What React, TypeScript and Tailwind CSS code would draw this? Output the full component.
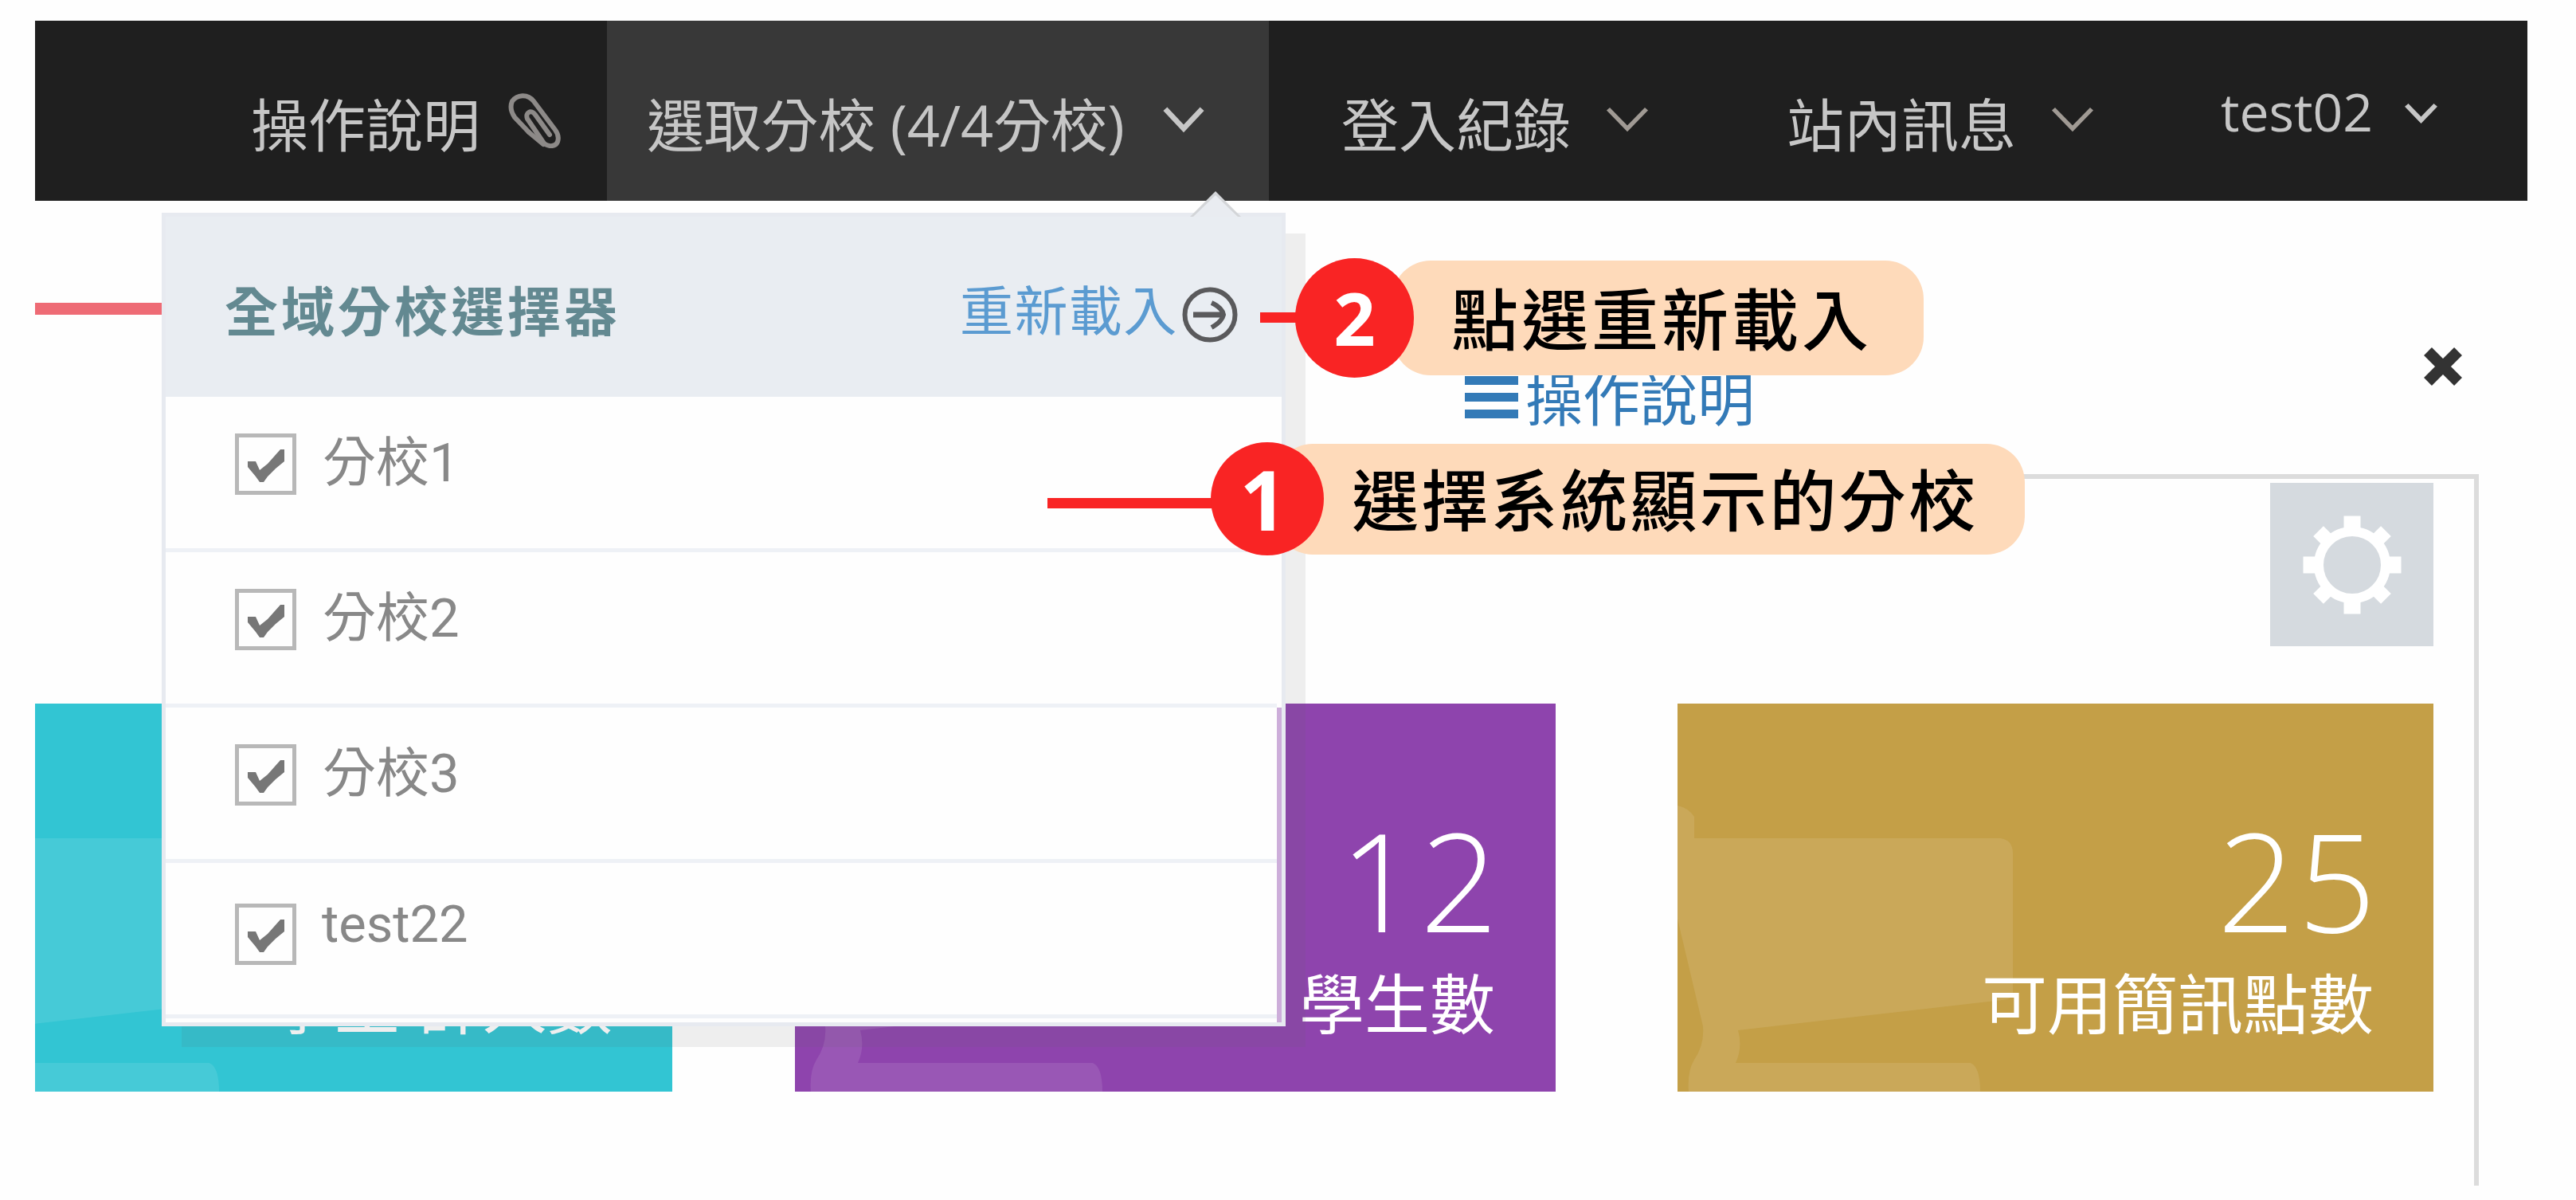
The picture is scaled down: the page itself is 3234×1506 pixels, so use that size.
import React from "react";

const SANS = "font-['Open_Sans','Noto_Sans_CJK_TC',sans-serif]";

function Chevron({ className, strokeWidth = 7 }: { className: string; strokeWidth?: number }) {
  return (
    <svg viewBox="0 0 54 36" preserveAspectRatio="none" fill="none" stroke="currentColor" strokeWidth={strokeWidth} className={className}>
      <path d="M3 4 L27 30 L51 4" />
    </svg>
  );
}

function PaperClip() {
  return (
    <svg viewBox="637 116 70 70" fill="none" stroke="#8d8a88" strokeWidth="6" strokeLinecap="round" className="ml-[33px] -mt-[4px] h-[70px] w-[70px] shrink-0">
      <path d="M690 169 L672 144 C667 137 659 141 662 149 L681 177 C686 185 697 185 700 178 C702 172 700 167 697 163 L670 127 C662 117 649 119 643 127 C640 134 642 141 646 147 L664 166" />
      <path d="M664 166 L682 181" />
    </svg>
  );
}

function CircleArrow() {
  return (
    <svg viewBox="0 0 72 72" fill="none" stroke="#5a5a5c" strokeWidth="6" className="ml-[6px] h-[72px] w-[72px] shrink-0">
      <circle cx="36" cy="36" r="31.5" />
      <path d="M15 36 H54" strokeWidth="7" />
      <path d="M38 21 C47 25 52 31 53 36 C52 41 47 47 38 52" />
    </svg>
  );
}

function Gear() {
  const diagonals = [45, 135, 225, 315];
  const straight = [0, 90, 180, 270];
  return (
    <svg viewBox="-62 -62 124 124" className="h-[124px] w-[124px]">
      <circle r="42" fill="none" stroke="#fff" strokeWidth="12" />
      {straight.map((a) => (
        <rect key={a} x="-10.5" y="-61.5" width="21" height="22" fill="#fff" transform={`rotate(${a})`} />
      ))}
      {diagonals.map((a) => (
        <rect key={a} x="-9" y="-60" width="18" height="20" fill="#fff" transform={`rotate(${a})`} />
      ))}
    </svg>
  );
}

function CartShape() {
  return (
    <svg viewBox="0 0 949 487" fill="#fff" fillOpacity="0.1" className="absolute right-0 top-0 h-[487px] w-[949px] overflow-visible">
      <path d="M-106 169 H0 V128 Q14 131 21 142 V169 H405 Q421 171 421 188 V364 Q420 371 408 372 L76 410 Q82 432 73 451 H368 Q380 456 380 487 H14 Q12 462 21 447 Q34 428 32 405 L0 270 V401 L-106 423 Z" />
    </svg>
  );
}

function StatCard({ className, value, label, textClass }: { className: string; value: string; label: string; textClass: string }) {
  return (
    <div className={`relative h-[487px] shrink-0 overflow-hidden text-right text-white ${className}`}>
      <CartShape />
      <div className="relative mr-[69px] mt-[134px] text-[172px] font-light leading-none tracking-[3px]">{value}</div>
      <div className={`relative mt-[29px] whitespace-pre text-[82px] font-normal leading-none ${textClass}`}>{label}</div>
    </div>
  );
}

function BranchRow({ label, latin }: { label: string; latin?: string }) {
  return (
    <li className="flex h-[195px] border-b-[5px] border-[#eef1f6] pl-[87px]">
      <span className={`flex h-[77px] w-[77px] shrink-0 items-center justify-center border-[5px] border-[#b8b8b8] ${label ? "mt-[46px]" : "mt-[51px]"}`}>
        <svg viewBox="0 0 46 41" className="mt-1 h-[41px] w-[46px]" fill="#777">
          <path d="M0 15 H10 L15 26 L25 18 L41 0 H46 V15 L35 24 L25 34 L20 41 L15 41 L10 34 L0 22 Z" />
        </svg>
      </span>
      <span className={`whitespace-nowrap leading-none font-['Roboto','Noto_Sans_CJK_TC',sans-serif] text-[#888] ${label ? "ml-[33px] mt-[50px] text-[67px]" : "ml-[32px] mt-[45px] text-[65px]"}`}>
        {label}
        {latin}
      </span>
    </li>
  );
}

function Callout({ number, text, className, pillClass, numberClass }: { number: string; text: string; className: string; pillClass: string; numberClass: string }) {
  return (
    <div className={`absolute flex items-center ${className}`}>
      <span className={`relative z-10 flex shrink-0 items-center justify-center rounded-full bg-[#f92424] font-['Noto_Sans',sans-serif] font-bold leading-none text-white ${numberClass}`}>{number}</span>
      <span className={`flex shrink-0 items-center whitespace-nowrap rounded-[48px] bg-[#fedaba] text-[84px] font-medium leading-none text-black ${pillClass}`}>{text}</span>
    </div>
  );
}

export default function App() {
  return (
    <div className={`relative h-[1506px] w-[3234px] overflow-hidden bg-[#fefefe] ${SANS}`}>
      <div className="h-[26px]" />
      <header className="ml-[44px] flex h-[226px] w-[3129px] whitespace-nowrap bg-[#1f1f1f] text-[72px] font-normal leading-none text-[#c6c6c6]">
        <div className="flex w-[718px] shrink-0 pl-[271px] pt-[94px]">
          <span className="w-[289px]">操作說明</span>
          <PaperClip />
        </div>
        <div className="flex w-[831px] shrink-0 bg-[#383838] pl-[50px] pt-[94px]">
          <span className="w-[602px] tracking-[-0.2px]">選取分校 (4/4分校)</span>
          <Chevron className="ml-[46px] mt-[13px] h-[34px] w-[52px]" />
        </div>
        <div className="flex w-[557px] shrink-0 pl-[91px] pt-[94px]">
          <span className="w-[288px]">登入紀錄</span>
          <Chevron className="ml-[44px] mt-[13px] h-[34px] w-[54px] text-[#a09a94]" strokeWidth={5.5} />
        </div>
        <div className="flex w-[570px] shrink-0 pl-[93px] pt-[94px]">
          <span className="w-[288px]">站內訊息</span>
          <Chevron className="ml-[44px] mt-[13px] h-[34px] w-[54px] text-[#a09a94]" strokeWidth={5.5} />
        </div>
        <div className="flex pl-[68px] pt-[80px]">
          <span className="w-[191px] text-[66px]">test02</span>
          <Chevron className="ml-[40px] mt-[23px] h-[26px] w-[41px]" strokeWidth={8} />
        </div>
      </header>

      <main className="ml-[44px] w-[3068px]">
        <div className="pt-[128px]">
          <div className="h-[15px] w-[200px] bg-[#ee6b75]" />
        </div>
        <div className="flex h-[200px] items-start justify-between">
          <a className="ml-[1795px] mt-[69px] flex text-[72px] font-normal leading-none text-[#337ab7]">
            <span className="mt-[8px] flex w-[67px] flex-col gap-[10px]">
              <span className="h-[11px] bg-current" />
              <span className="h-[11px] bg-current" />
              <span className="h-[11px] bg-current" />
            </span>
            <span className="ml-[9px]">操作說明</span>
          </a>
          <svg viewBox="0 0 50 48" className="mr-[20px] mt-[41px] h-[48px] w-[50px]" stroke="#333" strokeWidth="14">
            <path d="M6 5 L44 43 M44 5 L6 43" />
          </svg>
        </div>
        <section className="h-[893px] border-r-[6px] border-[#dcdcdc]">
          <div className="ml-auto h-[6px] w-[1400px] bg-[#dcdcdc]" />
          <div className="ml-auto mr-[51px] mt-[5px] flex h-[205px] w-[205px] items-center justify-center bg-[#d5dadf]">
            <Gear />
          </div>
          <div className="mt-[72px] flex">
            <StatCard className="w-[800px] bg-[#32c5d3]" value="4" label="學生 計人數" textClass="mr-[75px]" />
            <StatCard className="ml-[154px] w-[955px] bg-[#8e44ad]" value="12" label="學生數" textClass="mr-[76px]" />
            <StatCard className="ml-[153px] w-[949px] bg-[#c49f47]" value="25" label="可用簡訊點數" textClass="mr-[75px]" />
          </div>
        </section>
      </main>

      <div className="absolute left-[203px] top-[267px] flex h-[1021px] w-[1411px] flex-col border-[5px] border-[#e7eaf0] shadow-[25px_26px_0_rgba(102,102,102,0.1)]">
        <svg viewBox="0 0 72 32" className="absolute left-[1282px] top-[-32px] h-[32px] w-[72px]">
          <path d="M4 32 L36 0 L68 32" fill="#d3d5d8" />
          <path d="M8 32 L36 5 L64 32" fill="#e9ecf1" />
        </svg>
        <div className="flex h-[226px] shrink-0 items-start bg-[#e9edf2] pl-[74px] leading-none">
          <h2 className="mt-[85px] w-[503px] whitespace-nowrap text-[67px] font-bold tracking-[4px] text-[#638991]">全域分校選擇器</h2>
          <a className="ml-[420px] mt-[84px] w-[272px] shrink-0 whitespace-nowrap text-[67px] font-normal tracking-[1.4px] text-[#5b9bd1]">重新載入</a>
          <div className="mt-[87px]"><CircleArrow /></div>
        </div>
        <div className="flex grow">
          <ul className="w-[1395px] bg-[#fefefe]">
            <BranchRow label="分校" latin="1" />
            <BranchRow label="分校" latin="2" />
            <BranchRow label="分校" latin="3" />
            <BranchRow label="" latin="test22" />
          </ul>
          <div className="flex w-[6px] flex-col">
            <span className="h-[390px] bg-[#fefefe]" />
            <span className="grow bg-[#cdaeda]" />
          </div>
        </div>
      </div>

      <div className="absolute left-[1582px] top-[392px] h-[13px] w-[60px] bg-[#f92424]" />
      <Callout
        number="2"
        text="點選重新載入"
        className="left-[1626px] top-[324px] h-[150px]"
        numberClass="h-[150px] w-[149px] text-[92px]"
        pillClass="-ml-[27px] h-[144px] w-[667px] pl-[74px] pt-[4px] tracking-[4px]"
      />
      <div className="absolute left-[1315px] top-[625px] h-[13px] w-[215px] bg-[#f92424]" />
      <Callout
        number="1"
        text="選擇系統顯示的分校"
        className="left-[1520px] top-[555px] h-[142px]"
        numberClass="h-[142px] w-[142px] pr-[10px] text-[104px]"
        pillClass="-ml-[62px] h-[139px] w-[942px] pl-[97px] pt-[4px] tracking-[3.4px]"
      />
    </div>
  );
}
